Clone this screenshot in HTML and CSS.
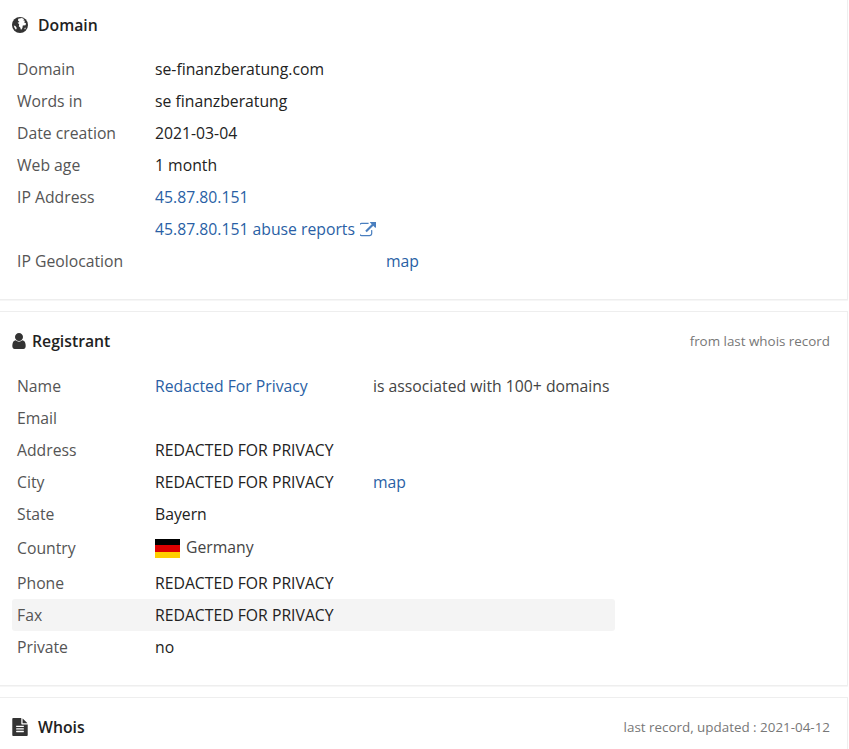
FILE: index.html
```html
<!DOCTYPE html>
<html lang="en">
<head>
<meta charset="utf-8">
<title>Domain</title>
<link rel="stylesheet" href="styles.css">
</head>
<body>
<section class="panel panel-first">
  <header class="panel-head head-domain">
    <h2 class="panel-title">
      <svg class="icon icon-globe" viewBox="0 0 16 16"><circle cx="8" cy="8" r="8" fill="#333"/><path d="M6.200 1.800 9.800 1l2.200 1-.6 1.400 1.600.4-.8 1.800 1.800.6-.4 2-2.800.4-.4 2.400-1.400 2-.8-2.400-1.400-1.400.4-2-1.600-1.400L7.400 5 6 3.600zM1.800 8.400l1.600.6 1.400 2-.8 1.800-1.400-1.800zM13 10.600l.8.4-.8 1.400-.6-.6z" fill="#fff"/></svg>
      <span class="title-gap">Domain</span>
    </h2>
  </header>
  <table class="info info-domain">
    <tr><td class="label">Domain</td><td>se-finanzberatung.com</td><td></td></tr>
    <tr><td class="label">Words in</td><td>se finanzberatung</td><td></td></tr>
    <tr><td class="label">Date creation</td><td>2021-03-04</td><td></td></tr>
    <tr><td class="label">Web age</td><td>1 month</td><td></td></tr>
    <tr><td class="label">IP Address</td><td><a href="#">45.87.80.151</a></td><td></td></tr>
    <tr><td class="label"></td><td><a href="#">45.87.80.151 abuse reports <svg class="icon icon-ext" viewBox="128 64 1664 1536"><path fill="currentColor" d="M1408 928v320q0 119-84.500 203.500t-203.500 84.500h-832q-119 0-203.500-84.500t-84.500-203.500v-832q0-119 84.500-203.500t203.500-84.500h704q14 0 23 9t9 23v64q0 14-9 23t-23 9h-704q-66 0-113 47t-47 113v832q0 66 47 113t113 47h832q66 0 113-47t47-113v-320q0-14 9-23t23-9h64q14 0 23 9t9 23zm384-864v512q0 26-19 45t-45 19-45-19l-176-176-652 652q-10 10-23 10t-23-10l-114-114q-10-10-10-23t10-23l652-652-176-176q-19-19-19-45t19-45 45-19h512q26 0 45 19t19 45z"/></svg></a></td><td></td></tr>
    <tr><td class="label">IP Geolocation</td><td></td><td><a href="#">map</a></td></tr>
  </table>
</section>

<section class="panel">
  <header class="panel-head head-registrant">
    <h2 class="panel-title">
      <svg class="icon icon-user" viewBox="256 128 1280 1536"><path fill="#333" d="M1536 1399q0 109-62.500 187t-150.500 78h-854q-88 0-150.500-78t-62.500-187q0-85 8.500-160.500t31.500-152 58.500-131 94-89 134.500-34.500q131 128 313 128t313-128q76 0 134.500 34.500t94 89 58.500 131 31.500 152 8.500 160.500zm-256-887q0 159-112.500 271.500t-271.500 112.500-271.500-112.500-112.500-271.500 112.500-271.500 271.500-112.500 271.500 112.500 112.500 271.500z"/></svg>
      <span>Registrant</span>
    </h2>
    <span class="panel-note">from last whois record</span>
  </header>
  <table class="info info-registrant">
    <tr><td class="label">Name</td><td><a href="#">Redacted For Privacy</a></td><td class="muted">is associated with 100+ domains</td></tr>
    <tr><td class="label">Email</td><td></td><td></td></tr>
    <tr><td class="label">Address</td><td>REDACTED FOR PRIVACY</td><td></td></tr>
    <tr><td class="label">City</td><td>REDACTED FOR PRIVACY</td><td><a href="#">map</a></td></tr>
    <tr><td class="label">State</td><td>Bayern</td><td></td></tr>
    <tr class="row-flag"><td class="label">Country</td><td class="country"><span class="flag"></span><span class="muted">Germany</span></td><td></td></tr>
    <tr><td class="label">Phone</td><td>REDACTED FOR PRIVACY</td><td></td></tr>
    <tr class="row-hover"><td class="label">Fax</td><td>REDACTED FOR PRIVACY</td><td></td></tr>
    <tr><td class="label">Private</td><td>no</td><td></td></tr>
  </table>
</section>

<section class="panel panel-last">
  <header class="panel-head head-whois">
    <h2 class="panel-title">
      <svg class="icon icon-file" viewBox="128 0 1536 1792"><path fill="#333" d="M1596 476q14 14 28 36h-472v-472q22 14 36 28zm-476 164h544v1056q0 40-28 68t-68 28h-1344q-40 0-68-28t-28-68v-1600q0-40 28-68t68-28h800v544q0 40 28 68t68 28zm160 736v-64q0-14-9-23t-23-9h-704q-14 0-23 9t-9 23v64q0 14 9 23t23 9h704q14 0 23-9t9-23zm0-256v-64q0-14-9-23t-23-9h-704q-14 0-23 9t-9 23v64q0 14 9 23t23 9h704q14 0 23-9t9-23zm0-256v-64q0-14-9-23t-23-9h-704q-14 0-23 9t-9 23v64q0 14 9 23t23 9h704q14 0 23-9t9-23z"/></svg>
      <span class="title-gap">Whois</span>
    </h2>
    <span class="panel-note">last record, updated : 2021-04-12</span>
  </header>
</section>
</body>
</html>
```
FILE: styles.css
```css
html, body {
  margin: 0;
  padding: 0;
  height: 749px;
  overflow: hidden;
  background: #fff;
}
body {
  font-family: "Open Sans", sans-serif;
  font-size: 15.75px;
  line-height: 22px;
  color: #222;
}
.panel {
  width: 848px;
  border: 1px solid #eee;
  border-left: 0;
  box-sizing: border-box;
  box-shadow: 0 1px 0 #f6f6f6;
  margin-bottom: 11px;
  padding-bottom: 22px;
  background: #fff;
}
.panel-first {
  border-top: 0;
  height: 300px;
}
.panel-last {
  border-bottom: 0;
  margin-bottom: 0;
  padding-bottom: 0;
  box-shadow: none;
}
.panel-head {
  display: flex;
  justify-content: space-between;
  align-items: center;
  padding: 0 17px 0 12px;
}
.head-domain { height: 50px; padding-bottom: 3px; }
.head-registrant { height: 58px; }
.head-whois { height: 58px; }
.panel-title {
  margin: 0;
  display: flex;
  align-items: center;
  font-size: 15.75px;
  font-weight: 600;
  color: #222;
}
.title-gap { margin-left: 10px; }
.panel-note {
  font-size: 13.4px;
  color: #777;
}
.icon { display: block; flex: none; }
.icon-globe { width: 16px; height: 16px; }
.icon-user { width: 14px; height: 16px; margin-right: 6px; }
.icon-file { width: 16px; height: 18px; }
.icon-ext {
  display: inline-block;
  width: 16px;
  height: 15px;
  margin-left: 1px;
  vertical-align: -2px;
  color: #4a7fbf;
}
.info {
  border-collapse: collapse;
  margin-left: 12px;
  table-layout: fixed;
}
.info td {
  padding: 5px;
  height: 32px;
  box-sizing: border-box;
  white-space: nowrap;
  color: #222;
}
.info td.label { width: 138px; color: #555; }
.info-domain { width: 600px; }
.info-domain td:nth-child(2) { width: 231px; }
.info-registrant { width: 603px; }
.info-registrant td:nth-child(2) { width: 218px; }
.info td.muted, .muted { color: #444; }
.info a {
  color: #2a5fa5;
  text-decoration: none;
}
.row-flag td { height: 37px; padding-bottom: 7px; }
.row-flag td.country { padding-bottom: 9px; }
.flag {
  display: inline-block;
  width: 25px;
  height: 19px;
  margin-right: 6px;
  vertical-align: -5px;
  background: linear-gradient(#000 33.3%, #d00 33.3%, #d00 66.6%, #ffce00 66.6%);
}
.row-hover td { background: #f4f4f4; }
.row-hover td:first-child { border-radius: 3px 0 0 3px; }
.row-hover td:last-child { border-radius: 0 3px 3px 0; }
```
